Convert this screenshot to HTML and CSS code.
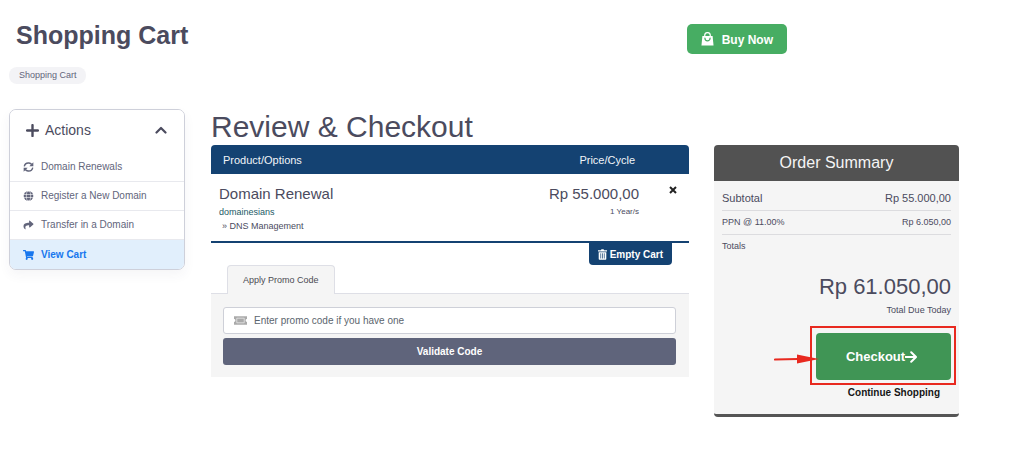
FILE: index.html
```html
<!DOCTYPE html>
<html lang="en">
<head>
<meta charset="utf-8">
<title>Shopping Cart</title>
<link rel="stylesheet" href="styles.css">
</head>
<body>
<header class="page-header">
  <h1 class="page-title">Shopping Cart</h1>
  <button class="buy-now" type="button">
    <svg class="icon-bag" viewBox="0 0 14 15" aria-hidden="true"><path d="M4 5V3.600a3 3 0 0 1 6 0V5" fill="none" stroke="currentColor" stroke-width="1.300"/><path d="M1.500 4.200h11l1 10.300H.5z" fill="currentColor"/><path d="M4.200 6.500c0 4 5.600 4 5.600 0" fill="none" stroke="#47ad63" stroke-width="1.300" stroke-linecap="round"/></svg>
    Buy Now
  </button>
</header>
<nav class="breadcrumb" aria-label="Breadcrumb"><a class="crumb" href="#">Shopping Cart</a></nav>

<div class="layout">
  <aside class="actions">
    <button class="actions-toggle" type="button" aria-expanded="true">
      <svg class="icon-plus" viewBox="0 0 12 12" aria-hidden="true"><path d="M6 1v10M1 6h10" stroke="currentColor" stroke-width="2.200" stroke-linecap="round"/></svg>
      <span>Actions</span>
      <svg class="icon-chevron" viewBox="0 0 12 12" aria-hidden="true"><path d="M1.500 8.500 6 4l4.500 4.500" fill="none" stroke="currentColor" stroke-width="2.200" stroke-linecap="round" stroke-linejoin="round"/></svg>
    </button>
    <a class="action" href="#">
      <svg class="icon" viewBox="0 0 512 512" aria-hidden="true"><g fill="none" stroke="currentColor" stroke-width="72"><path d="M40 225C65 95 180 38 285 50c60 8 100 35 140 75"/><path d="M472 287C447 417 332 474 227 462c-60-8-100-35-140-75"/></g><path d="M504 16v205H299zM8 496V291h205z" fill="currentColor"/></svg>
      Domain Renewals</a>
    <a class="action" href="#">
      <svg class="icon" viewBox="0 0 12 12" aria-hidden="true"><circle cx="6" cy="6" r="5.800" fill="currentColor"/><g fill="none" stroke="#fff" stroke-width=".7"><ellipse cx="6" cy="6" rx="2.600" ry="5.800"/><path d="M0 4.200h12M0 7.800h12"/></g></svg>
      Register a New Domain</a>
    <a class="action" href="#">
      <svg class="icon" viewBox="0 0 512 512" aria-hidden="true"><path d="M503.700 189.800 327.700 37.900C312.300 24.500 288 35.300 288 56v80.100C127.400 137.900 0 170.100 0 322.300c0 61.400 39.600 122.300 83.300 154.100 13.700 9.900 33.100-2.500 28.100-18.600C66.100 312.800 132.900 274.300 288 272.100V360c0 20.700 24.300 31.500 39.700 18.200l176-152c11.100-9.600 11.100-26.800 0-36.400z" fill="currentColor"/></svg>
      Transfer in a Domain</a>
    <a class="action action-current" href="#" aria-current="page">
      <svg class="icon" viewBox="0 0 576 512" aria-hidden="true"><path d="M528.100 301.300l47.300-208C578.800 78.300 567.400 64 552 64H159.200l-9.200-44.800C147.800 8 137.900 0 126.500 0H24C10.700 0 0 10.700 0 24v16c0 13.300 10.700 24 24 24h69.900l70.200 343.400C147.300 417.100 136 435.200 136 456c0 30.900 25.100 56 56 56s56-25.100 56-56c0-15.700-6.400-29.800-16.800-40h209.600C430.400 426.200 424 440.300 424 456c0 30.900 25.100 56 56 56s56-25.100 56-56c0-22.200-12.900-41.300-31.600-50.400l5.500-24.300c3.400-15-8-29.300-23.400-29.300H218.100l-6.500-32h293.100c11.200 0 20.900-7.800 23.400-18.700z" fill="currentColor"/></svg>
      View Cart</a>
  </aside>

  <main class="review">
    <h2 class="review-title">Review &amp; Checkout</h2>
    <table class="cart">
      <thead>
        <tr><th class="col-product" scope="col">Product/Options</th><th class="col-price" scope="col">Price/Cycle</th><th class="col-remove"></th></tr>
      </thead>
      <tbody>
        <tr>
          <td class="product">
            <div class="item-name">Domain Renewal</div>
            <div class="item-domain">domainesians</div>
            <div class="item-option">» DNS Management</div>
          </td>
          <td class="price"><div class="item-price">Rp 55.000,00</div><div class="item-cycle">1 Year/s</div></td>
          <td class="remove-cell"><button class="remove" type="button" aria-label="Remove"><svg class="icon-x" viewBox="0 0 8 8" aria-hidden="true"><path d="m1 1 6 6M7 1 1 7" stroke="currentColor" stroke-width="2"/></svg></button></td>
        </tr>
      </tbody>
    </table>
    <div class="empty-row">
      <button class="empty-cart" type="button">
        <svg class="icon-trash" viewBox="0 0 9 11" aria-hidden="true"><path d="M0 1.200h2.800L3.500.3h2l.7.900H9v1.300H0zM.7 3.200h7.600V9.700c0 .7-.4 1-1 1H1.700c-.6 0-1-.3-1-1z" fill="currentColor"/><path d="M2.700 4.300v5.200M4.500 4.300v5.200M6.300 4.300v5.200" stroke="#144272" stroke-width=".7"/></svg>
        Empty Cart</button>
    </div>
    <div class="tabs"><button class="tab" type="button">Apply Promo Code</button></div>
    <form class="promo">
      <label class="promo-field">
        <svg class="icon-ticket" viewBox="0 0 14 9" aria-hidden="true"><path d="M0 0h14v3a1.500 1.500 0 0 0 0 3v3H0V6a1.500 1.500 0 0 0 0-3z" fill="#aaa"/><path d="M3 2h8v5H3z" fill="none" stroke="#eee" stroke-width=".8"/></svg>
        <input class="promo-input" type="text" placeholder="Enter promo code if you have one" aria-label="Promo code">
      </label>
      <button class="validate" type="button">Validate Code</button>
    </form>
  </main>

  <section class="summary">
    <h2 class="summary-title">Order Summary</h2>
    <div class="summary-body">
      <div class="line line-main"><span>Subtotal</span><span>Rp 55.000,00</span></div>
      <div class="line"><span>PPN @ 11.00%</span><span>Rp 6.050,00</span></div>
      <div class="line line-last"><span>Totals</span></div>
      <div class="total">Rp 61.050,00</div>
      <div class="total-label">Total Due Today</div>
      <div class="checkout-wrap">
        <button class="checkout" type="button">Checkout<svg class="icon-arrow" viewBox="0 0 12 12" aria-hidden="true"><path d="M.5 6h10M6.200 1.200 11 6l-4.800 4.800" fill="none" stroke="currentColor" stroke-width="2" stroke-linejoin="round" stroke-linecap="round"/></svg></button>
        <div class="highlight"></div>
        <svg class="pointer" viewBox="0 0 46 10" aria-hidden="true"><path d="M1 5.500 24 5" stroke="#e8291f" stroke-width="2.200" stroke-linecap="round"/><path d="M23 .5 45 5 23 9.500z" fill="#e8291f"/></svg>
      </div>
      <a class="continue" href="#">Continue Shopping</a>
    </div>
  </section>
</div>
</body>
</html>
```
FILE: styles.css
```css
* {
  box-sizing: border-box;
}

body {
  margin: 0;
  padding: 20px 65px 40px 9px;
  background: #fff;
  color: #4b4b5e;
  font-family: "Liberation Sans", Arial, sans-serif;
  font-size: 10px;
}

button,
input {
  font-family: inherit;
}

button {
  border: 0;
  cursor: pointer;
}

a {
  text-decoration: none;
}

svg {
  display: block;
  flex: none;
}

h1,
h2 {
  margin: 0;
}

.page-header {
  display: flex;
  align-items: flex-start;
  justify-content: space-between;
  padding: 0 172px 0 7px;
}

.page-title {
  font-size: 25px;
  line-height: 30px;
}

.buy-now {
  display: flex;
  align-items: center;
  gap: 8px;
  height: 30px;
  margin-top: 4px;
  padding: 2px 14px 0;
  border-radius: 5px;
  background: #47ad63;
  color: #fff;
  font-size: 12px;
  font-weight: 700;
}

.icon-bag {
  width: 13px;
  height: 14px;
  margin-bottom: 3px;
}

.breadcrumb {
  display: flex;
  margin-top: 13px;
}

.crumb {
  padding: 0 9px 0 10px;
  border-radius: 8px;
  background: #f3f3f6;
  color: #62657b;
  font-size: 9px;
  line-height: 17px;
}

.layout {
  display: grid;
  grid-template-columns: 177fr 478fr 245fr;
  align-items: start;
  gap: 25px;
  margin-top: 25px;
}

.actions {
  overflow: hidden;
  margin-right: 1px;
  border: 1px solid #ced0da;
  border-radius: 7px;
  box-shadow: 0 5px 12px rgba(60, 60, 90, 0.05);
}

.actions-toggle {
  display: flex;
  align-items: center;
  gap: 6px;
  width: 100%;
  height: 43px;
  padding: 0 17px 3px 16px;
  background: #fff;
  color: #4b4b5e;
  font-size: 14px;
}

.icon-plus {
  width: 13px;
  height: 13px;
}

.icon-chevron {
  width: 12px;
  height: 12px;
  margin-left: auto;
}

.action {
  display: flex;
  align-items: center;
  gap: 7px;
  padding: 0 13px;
  border-bottom: 1px solid #e8e9ee;
  color: #62657b;
  font-size: 10px;
  line-height: 28px;
}

.action-current {
  border-bottom: 0;
  background: #e1effc;
  color: #1777ee;
  font-weight: 700;
  line-height: 29px;
}

.icon {
  width: 11px;
  height: 10px;
}

.review-title {
  font-size: 30px;
  font-weight: 400;
  line-height: 36px;
}

.cart {
  width: 100%;
  border-collapse: separate;
  border-spacing: 0;
  border-bottom: 2px solid #144272;
}

.cart th {
  height: 29px;
  padding: 0;
  background: #144272;
  color: #f1f4f8;
  font-size: 11px;
  font-weight: 400;
}

.cart .col-product {
  padding-left: 12px;
  border-top-left-radius: 4px;
  text-align: left;
}

.cart .col-price {
  padding-right: 4px;
  text-align: right;
}

.cart .col-remove {
  width: 50px;
  border-top-right-radius: 4px;
}

.cart td {
  padding: 10px 0 8px;
  vertical-align: top;
}

.cart .product {
  padding-left: 8px;
}

.cart .price {
  text-align: right;
}

.cart .remove-cell {
  padding-right: 12px;
  text-align: right;
}

.item-name,
.item-price {
  font-size: 15px;
  line-height: 20px;
}

.item-domain,
.item-option {
  font-size: 9px;
  line-height: 14px;
}

.item-domain {
  margin-top: 1px;
  color: #1d5a66;
}

.item-option {
  padding-left: 3px;
}

.item-cycle {
  font-size: 8px;
  line-height: 16px;
}

.remove {
  padding: 2px 0;
  background: none;
  color: #222;
}

.icon-x {
  width: 8px;
  height: 8px;
}

.empty-row {
  display: flex;
  justify-content: flex-end;
  padding-right: 17px;
}

.empty-cart {
  display: flex;
  align-items: center;
  gap: 3px;
  height: 22px;
  padding: 0 9px;
  border-radius: 0 0 4px 4px;
  background: #144272;
  color: #fff;
  font-size: 10px;
  font-weight: 700;
}

.icon-trash {
  width: 9px;
  height: 11px;
}

.tabs {
  display: flex;
  padding-left: 16px;
  border-bottom: 1px solid #dedfe6;
}

.tab {
  height: 29px;
  margin-bottom: -1px;
  padding: 0 15px;
  border: 1px solid #dedfe6;
  border-bottom: 0;
  border-radius: 4px 4px 0 0;
  background: #f5f5f5;
  color: #4b4b52;
  font-size: 9px;
}

.promo {
  display: grid;
  gap: 4px;
  padding: 13px 13px 12px 12px;
  background: #f5f5f5;
}

.promo-field {
  display: flex;
  align-items: center;
  gap: 7px;
  height: 27px;
  padding: 0 10px;
  border: 1px solid #ced0d8;
  border-radius: 3px;
  background: #fff;
}

.icon-ticket {
  width: 13px;
  height: 9px;
}

.promo-input {
  flex: 1;
  min-width: 0;
  padding: 0;
  border: 0;
  outline: 0;
  background: none;
  font-size: 10px;
}

.promo-input::placeholder {
  color: #5c656e;
  opacity: 1;
}

.validate {
  height: 27px;
  border-radius: 3px;
  background: #5f647b;
  color: #fff;
  font-size: 10px;
  font-weight: 700;
}

.summary {
  margin-top: 36px;
  overflow: hidden;
  border-bottom: 3px solid #555;
  border-radius: 4px;
  background: #f5f5f5;
}

.summary-title {
  background: #525252;
  color: #f5f5f5;
  font-size: 16px;
  font-weight: 400;
  line-height: 36px;
  text-align: center;
}

.summary-body {
  display: flex;
  flex-direction: column;
  padding: 5px 8px 11px;
}

.line {
  display: flex;
  justify-content: space-between;
  border-bottom: 1px solid #dcdcdf;
  font-size: 9px;
  line-height: 23px;
}

.line-main {
  font-size: 11px;
  line-height: 24px;
}

.line-last {
  border-bottom: 0;
}

.total {
  margin-top: 15px;
  font-size: 22px;
  line-height: 28px;
  text-align: right;
}

.total-label {
  font-size: 9px;
  line-height: 18px;
  text-align: right;
}

.checkout-wrap {
  position: relative;
  align-self: flex-end;
  width: 135px;
  margin-top: 14px;
}

.checkout {
  display: flex;
  align-items: center;
  justify-content: center;
  width: 100%;
  height: 47px;
  padding: 0 4px 0 0;
  border-radius: 4px;
  background: #409555;
  color: #fff;
  font-size: 13px;
  font-weight: 700;
}

.icon-arrow {
  width: 12px;
  height: 12px;
}

.highlight {
  position: absolute;
  inset: -7px -5px -5px -6px;
  border: 2px solid #e8291f;
  pointer-events: none;
}

.pointer {
  position: absolute;
  top: 21px;
  left: -42px;
  width: 46px;
  height: 10px;
}

.continue {
  align-self: flex-end;
  margin-top: 3px;
  padding-right: 11px;
  color: #161616;
  font-size: 10px;
  font-weight: 700;
  line-height: 20px;
}
```
